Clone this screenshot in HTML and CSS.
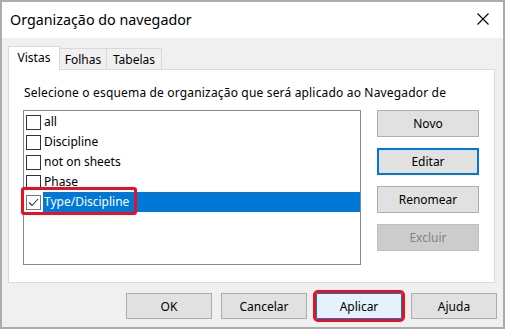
FILE: index.html
```html
<!DOCTYPE html>
<html lang="pt-BR">
<head>
    <meta charset="UTF-8">
    <title>Organização do navegador</title>
    <link rel="stylesheet" href="styles.css">
</head>
<body>
    <div class="dialog">
        <div class="titlebar">
            <span class="title">Organização do navegador</span>
            <span class="close">
                <svg width="12" height="12" viewBox="0 0 12 12"><path d="M0.5 0.5 L11.5 11.5 M11.5 0.5 L0.5 11.5" stroke="#000" stroke-width="1.1" fill="none"/></svg>
            </span>
        </div>

        <div class="content">
            <!-- abas -->
            <div class="tabs">
                <div class="tab active">Vistas</div>
                <div class="tab tab-folhas">Folhas</div>
                <div class="tab tab-tabelas">Tabelas</div>
            </div>

            <div class="panel">
                <p class="hint">Selecione o esquema de organização que será aplicado ao Navegador de</p>
                <div class="panel-row">
                    <ul class="list">
                        <li><span class="check"></span><span class="label">all</span></li>
                        <li><span class="check"></span><span class="label">Discipline</span></li>
                        <li><span class="check"></span><span class="label">not on sheets</span></li>
                        <li><span class="check"></span><span class="label">Phase</span></li>
                        <li class="selected">
                            <span class="check checked">
                                <svg width="13" height="13" viewBox="0 0 13 13"><path d="M2 6.5 L5 9.5 L11 3" stroke="#333" stroke-width="1.1" fill="none"/></svg>
                            </span>
                            <span class="label">Type/Discipline</span>
                            <span class="highlight"></span>
                        </li>
                    </ul>
                    <div class="side-buttons">
                        <button class="btn">Novo</button>
                        <button class="btn btn-default">Editar</button>
                        <button class="btn">Renomear</button>
                        <button class="btn" disabled>Excluir</button>
                    </div>
                </div>
            </div>

            <div class="footer">
                <button class="btn btn-footer">OK</button>
                <button class="btn btn-footer">Cancelar</button>
                <button class="btn btn-footer btn-hot">Aplicar</button>
                <button class="btn btn-footer">Ajuda</button>
            </div>
        </div>
    </div>
</body>
</html>
```

FILE: styles.css
```css
* {
    margin: 0;
    padding: 0;
    box-sizing: border-box;
}
body {
    font-family: "Noto Sans", "Liberation Sans", sans-serif;
    font-size: 12px;
    color: #000;
    background: #fff;
}
.dialog {
    width: 505px;
    height: 329px;
    border: 2px solid #acacac;
    background: #f0f0f0;
    overflow: hidden;
}

/* barra de titulo */
.titlebar {
    height: 36px;
    background: #fff;
    display: flex;
    align-items: center;
    justify-content: space-between;
    padding: 0 14px 0 8px;
}
.title {
    font-size: 14.3px;
    margin-top: -1px;
}
.close {
    display: flex;
    margin-top: -2px;
}

.content {
    padding: 8px 8px 0 6px;
}

/* abas */
.tabs {
    display: flex;
    align-items: flex-end;
    height: 24px;
    margin-bottom: -1px;
    position: relative;
    z-index: 1;
}
.tab {
    height: 21px;
    margin-bottom: 1px;
    border: 1px solid #d9d9d9;
    border-bottom: none;
    background: #f0f0f0;
    display: flex;
    align-items: center;
    justify-content: center;
}
.tab.active {
    width: 52px;
    height: 24px;
    margin-bottom: 0;
    background: #fff;
    padding-bottom: 2px;
    position: relative;
    z-index: 2;
}
.tab-folhas {
    width: 48px;
    margin-left: -1px;
}
.tab-tabelas {
    width: 56px;
    margin-left: -1px;
}

.panel {
    height: 214px;
    background: #fff;
    border: 1px solid #d9d9d9;
    padding: 14px 0 0 14px;
}
.hint {
    line-height: 16px;
    letter-spacing: 0.17px;
    margin: 0 0 10px 1px;
    padding-top: 1px;
}
.panel-row {
    display: flex;
    gap: 16px;
    margin-top: -1px;
}

/* lista */
.list {
    list-style: none;
    width: 338px;
    height: 155px;
    border: 1px solid #828790;
    padding-top: 1px;
}
.list li {
    height: 20px;
    display: flex;
    align-items: center;
    padding-left: 2px;
    position: relative;
}
.check {
    width: 15px;
    height: 15px;
    border: 1px solid #333;
    margin-right: 2px;
    display: flex;
    align-items: center;
    justify-content: center;
}
.check.checked {
    border-color: #777;
}
.label {
    height: 20px;
    line-height: 20px;
    padding-left: 1px;
}
.selected .label {
    flex: 1;
    background: #0078d7;
    color: #fff;
}
.highlight {
    position: absolute;
    left: -3px;
    top: -5px;
    width: 116px;
    height: 28px;
    border: 3px solid #e81123;
    border-radius: 3px;
}

/* botoes */
.side-buttons {
    display: flex;
    flex-direction: column;
    gap: 11px;
}
.btn {
    font-family: inherit;
    font-size: 12px;
    width: 102px;
    height: 27px;
    background: #e1e1e1;
    border: 1px solid #adadad;
    color: #000;
}
.btn-default {
    border: 2px solid #0078d7;
}
.btn:disabled {
    background: #cccccc;
    border-color: #bfbfbf;
    color: #838383;
}

.footer {
    display: flex;
    justify-content: flex-end;
    gap: 9px;
    margin: 10px -2px 0 0;
}
.btn-footer {
    width: 86px;
    height: 26px;
}
.btn-hot {
    background: #e5f1fb;
    border-color: #0078d7;
    outline: 3px solid #e81123;
    border-radius: 2px;
}
```
